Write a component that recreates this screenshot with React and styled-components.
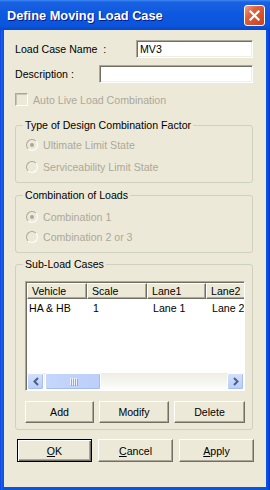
import styled, { createGlobalStyle, css } from 'styled-components';

const GlobalStyle = createGlobalStyle`
  html, body {
    margin: 0;
    padding: 0;
  }
  body {
    width: 270px;
    height: 490px;
    overflow: hidden;
    font-family: "Liberation Sans", Arial, sans-serif;
    font-size: 10.6px;
    color: #000;
  }
`;

const Window = styled.div`
  width: 270px;
  height: 490px;
  display: flex;
  flex-direction: column;
  overflow: hidden;
`;

const TitleBar = styled.div`
  height: 30px;
  flex-shrink: 0;
  display: flex;
  align-items: center;
  padding: 0 5px 0 7px;
  box-sizing: border-box;
  background: linear-gradient(to bottom, #3d8bf5 0, #1b62e2 2px, #0d58df 14px, #0a55dc 26px, #0846c8 30px);
`;

const Title = styled.div`
  color: #fff;
  font-weight: bold;
  font-size: 12.8px;
  text-shadow: 1px 1px #0a1883;
  flex: 1;
  padding-top: 1px;
`;

const CloseButton = styled.div`
  width: 21px;
  height: 21px;
  box-sizing: border-box;
  border: 1px solid #fff;
  border-radius: 3px;
  background: linear-gradient(135deg, #efa08a 0%, #e0603c 35%, #c8411c 100%);
  display: flex;
  align-items: center;
  justify-content: center;
  margin-top: 1px;
`;

const Frame = styled.div`
  flex: 1;
  display: flex;
  min-width: 0;
  padding: 0 4px 3px 4px;
  background: linear-gradient(to right, #0831d9 0, #1a64ee 1px, #0a55df 3px, #0a55df calc(100% - 3px), #0831d9 100%);
`;

const Body = styled.div`
  flex: 1;
  min-width: 0;
  background: #ece9d8;
  padding: 10px 13px 0 11px;
  display: flex;
  flex-direction: column;
`;

const FieldRow = styled.div`
  display: flex;
  align-items: center;
  height: 18px;
  margin-top: ${p => p.$gap || 0}px;
`;

const Label = styled.span`
  white-space: pre;
  flex: 1;
`;

const TextBox = styled.input`
  width: ${p => p.$w}px;
  height: 18px;
  box-sizing: border-box;
  border: 1px solid;
  border-color: #aca899 #fff #fff #aca899;
  box-shadow: inset 1px 1px #716f64, inset -1px -1px #f1efe2;
  background: #fff;
  padding: 0 3px;
  font: 10.6px "Liberation Sans", Arial, sans-serif;
  color: #000;
  outline: none;
`;

const CheckRow = styled.div`
  display: flex;
  align-items: center;
  gap: 5px;
  margin-top: 10px;
  height: 13px;
  color: #aca899;
`;

const CheckBox = styled.span`
  width: 13px;
  height: 13px;
  box-sizing: border-box;
  border: 1px solid;
  border-color: #aca899 #fff #fff #aca899;
  box-shadow: inset 1px 1px #c7c4b6;
  background: #ece9d8;
`;

const Group = styled.fieldset`
  margin: ${p => p.$top}px 0 0 0;
  padding: 0;
  border: 1px solid #d0d0bf;
  border-radius: 3px;
  min-width: 0;
`;

const Legend = styled.legend`
  margin-left: 7px;
  padding: 0 2px;
  line-height: 13px;
  color: #000;
`;

const GroupContent = styled.div`
  display: flex;
  flex-direction: column;
  gap: ${p => p.$gap || 0}px;
  padding: ${p => p.$pad};
  min-width: 0;
`;

const RadioRow = styled.div`
  display: flex;
  align-items: center;
  gap: 5px;
  height: 16px;
  color: #aca899;
`;

const Radio = styled.span`
  width: 12px;
  height: 12px;
  box-sizing: border-box;
  border-radius: 50%;
  border: 1px solid;
  border-color: #aca899 #fff #fff #aca899;
  background: #ece9d8;
  display: flex;
  align-items: center;
  justify-content: center;
  &::after {
    content: "";
    width: 4px;
    height: 4px;
    border-radius: 50%;
    background: ${p => (p.$checked ? '#aca899' : 'transparent')};
  }
`;

const ListView = styled.div`
  height: 110px;
  min-width: 0;
  box-sizing: border-box;
  border: 1px solid;
  border-color: #aca899 #fff #fff #aca899;
  padding: 1px 0 0 1px;
  box-shadow: inset 1px 1px #716f64;
  background: #fff;
  display: flex;
  flex-direction: column;
  overflow: hidden;
`;

const Header = styled.div`
  display: flex;
  height: 16px;
  flex-shrink: 0;
  min-width: 0;
`;

const HeaderCell = styled.div`
  width: ${p => p.$w}px;
  flex-shrink: 0;
  box-sizing: border-box;
  padding-left: 4px;
  line-height: 14px;
  background: #ece9d8;
  border: 1px solid;
  border-color: #fff #716f64 #716f64 #fff;
  box-shadow: inset -1px -1px #aca899;
  white-space: nowrap;
  overflow: hidden;
`;

const Row = styled.div`
  display: flex;
  height: 16px;
  margin-top: 1px;
  line-height: 16px;
  min-width: 0;
`;

const Cell = styled.div`
  width: ${p => p.$w}px;
  flex-shrink: 0;
  box-sizing: border-box;
  padding-left: ${p => (p.$first ? 2 : 6)}px;
  white-space: nowrap;
  overflow: hidden;
`;

const ScrollBar = styled.div`
  margin-top: auto;
  height: 17px;
  flex-shrink: 0;
  display: flex;
  background: linear-gradient(to bottom, #eeede5, #fdfdfa);
`;

const ArrowButton = styled.div`
  width: 17px;
  height: 17px;
  flex-shrink: 0;
  box-sizing: border-box;
  border: 1px solid #fff;
  border-radius: 2px;
  background: linear-gradient(to bottom, #d3e0fd, #b9cdf9);
  box-shadow: inset -1px -1px #a7bdf0;
  display: flex;
  align-items: center;
  justify-content: center;
  ${p => p.$right && css`margin-left: auto;`}
`;

const Thumb = styled.div`
  width: 56px;
  height: 17px;
  flex-shrink: 0;
  box-sizing: border-box;
  margin-left: 1px;
  border: 1px solid #fff;
  border-radius: 2px;
  background: linear-gradient(to right, #c6d6fc, #bccffa);
  box-shadow: inset -1px -1px #a4bbef;
  display: flex;
  align-items: center;
  justify-content: center;
  gap: 1px;
`;

const Grip = styled.span`
  width: 1px;
  height: 7px;
  background: #eef4fe;
  box-shadow: 1px 1px #8fa9e6;
`;

const ButtonRow = styled.div`
  display: flex;
  justify-content: space-between;
  margin-top: 10px;
`;

const Button = styled.button`
  width: ${p => p.$w}px;
  height: ${p => p.$h || 22}px;
  box-sizing: border-box;
  padding: 0;
  font: 10.6px "Liberation Sans", Arial, sans-serif;
  color: #000;
  background: #ece9d8;
  border: 1px solid;
  border-color: #fff #716f64 #716f64 #fff;
  box-shadow: inset -1px -1px #aca899;
  ${p => p.$default && css`
    border-color: #000;
    box-shadow: inset 1px 1px #fff, inset -1px -1px #716f64, inset -2px -2px #aca899;
  `}
`;

const Footer = styled.div`
  display: flex;
  justify-content: space-between;
  margin: 9px -1px 0 2px;
`;

const Mnemonic = styled.u`
  text-decoration: underline;
`;

const columns = [
  { title: 'Vehicle', w: 60 },
  { title: 'Scale', w: 60 },
  { title: 'Lane1', w: 59 },
  { title: 'Lane2', w: 60 },
];

const rows = [['HA & HB', '1', 'Lane 1', 'Lane 2']];

const Chevron = ({ right }) => (
  <svg width="8" height="9" viewBox="0 0 8 9">
    <path
      d={right ? 'M2 1 L5.5 4.5 L2 8' : 'M6 1 L2.5 4.5 L6 8'}
      fill="none"
      stroke="#4d6185"
      strokeWidth="2"
    />
  </svg>
);

export default function App() {
  return (
    <Window>
      <GlobalStyle />
      <TitleBar>
        <Title>Define Moving Load Case</Title>
        <CloseButton>
          <svg width="11" height="11" viewBox="0 0 11 11">
            <path d="M1.5 1.5 L9.5 9.5 M9.5 1.5 L1.5 9.5" stroke="#fff" strokeWidth="2.2" strokeLinecap="square" />
          </svg>
        </CloseButton>
      </TitleBar>
      <Frame>
        <Body>
          <FieldRow>
            <Label>Load Case Name  :</Label>
            <TextBox $w={117} defaultValue="MV3" />
          </FieldRow>
          <FieldRow $gap={7}>
            <Label>Description :</Label>
            <TextBox $w={154} defaultValue="" />
          </FieldRow>
          <CheckRow>
            <CheckBox />
            <span>Auto Live Load Combination</span>
          </CheckRow>

          <Group $top={13}>
            <Legend>Type of Design Combination Factor</Legend>
            <GroupContent $pad="5px 0 7px 10px" $gap={6}>
              <RadioRow><Radio $checked />Ultimate Limit State</RadioRow>
              <RadioRow><Radio />Serviceability Limit State</RadioRow>
            </GroupContent>
          </Group>

          <Group $top={6}>
            <Legend>Combination of Loads</Legend>
            <GroupContent $pad="7px 0 7px 10px" $gap={4}>
              <RadioRow><Radio $checked />Combination 1</RadioRow>
              <RadioRow><Radio />Combination 2 or 3</RadioRow>
            </GroupContent>
          </Group>

          <Group $top={5}>
            <Legend>Sub-Load Cases</Legend>
            <GroupContent $pad="10px 7px 6px 9px">
              <ListView>
                <Header>
                  {columns.map(c => (
                    <HeaderCell key={c.title} $w={c.w}>{c.title}</HeaderCell>
                  ))}
                </Header>
                {rows.map((r, i) => (
                  <Row key={i}>
                    {r.map((v, j) => (
                      <Cell key={j} $w={columns[j].w} $first={j === 0}>{v}</Cell>
                    ))}
                  </Row>
                ))}
                <ScrollBar>
                  <ArrowButton><Chevron /></ArrowButton>
                  <Thumb>
                    <Grip /><Grip /><Grip /><Grip />
                  </Thumb>
                  <ArrowButton $right><Chevron right /></ArrowButton>
                </ScrollBar>
              </ListView>
              <ButtonRow>
                <Button $w={69}>Add</Button>
                <Button $w={70}>Modify</Button>
                <Button $w={71}>Delete</Button>
              </ButtonRow>
            </GroupContent>
          </Group>

          <Footer>
            <Button $w={75} $h={23} $default><Mnemonic>O</Mnemonic>K</Button>
            <Button $w={75} $h={23}><Mnemonic>C</Mnemonic>ancel</Button>
            <Button $w={75} $h={23}><Mnemonic>A</Mnemonic>pply</Button>
          </Footer>
        </Body>
      </Frame>
    </Window>
  );
}
